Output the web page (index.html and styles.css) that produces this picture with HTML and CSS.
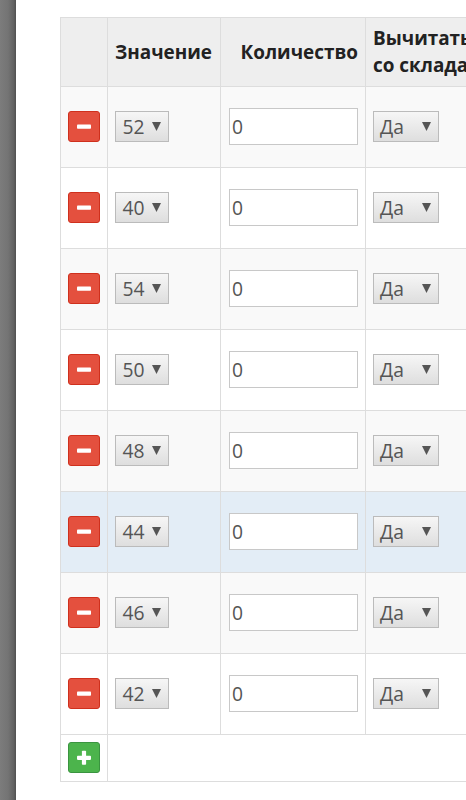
FILE: index.html
```
<!DOCTYPE html>
<html lang="ru">
<head>
<meta charset="utf-8">
<title>Опции</title>
<link rel="stylesheet" href="styles.css">
</head>
<body>
<div class="backdrop"></div>
<main class="panel">
  <div class="table" id="table">
    <div class="row head">
      <div class="cell"></div>
      <div class="cell"><span>Значение</span></div>
      <div class="cell right"><span>Количество</span></div>
      <div class="cell"><span>Вычитать<br>со склада</span></div>
    </div>
  </div>
</main>
<template id="option">
  <div class="row">
    <div class="cell"><button class="btn remove" type="button"><svg viewBox="0 0 32 31"><rect x="9" y="13.500" width="14" height="4.300" rx="0.8"/></svg></button></div>
    <div class="cell"><div class="select"><span class="value"></span><i class="arrow"></i></div></div>
    <div class="cell"><div class="input">0</div></div>
    <div class="cell"><div class="select wide"><span>Да</span><i class="arrow"></i></div></div>
  </div>
</template>
<template id="footer">
  <div class="row foot">
    <div class="cell"><button class="btn add" type="button"><svg viewBox="0 0 32 31"><rect x="9" y="13.700" width="14" height="4.200" rx="0.8"/><rect x="13.900" y="8.800" width="4.200" height="14" rx="0.8"/></svg></button></div>
    <div class="cell"></div>
  </div>
</template>
<script src="script.js"></script>
</body>
</html>
```
FILE: styles.css
```
* { box-sizing: border-box; }
body {
  margin: 0;
  height: 800px;
  overflow: hidden;
  display: flex;
  background: #fff;
  font-family: "Open Sans", "Noto Sans", sans-serif;
  font-size: 20px;
  color: #555;
}
.backdrop {
  flex: 0 0 16px;
  background: linear-gradient(90deg, #7c7c7c 0, #747474 50%, #626262 85%, #505050 100%);
}
.panel {
  flex: 1;
  min-width: 0;
  overflow: hidden;
  padding: 17px 0 0 44px;
}
.table {
  width: 480px;
  border-bottom: 1px solid #ddd;
}
.row {
  display: grid;
  grid-template-columns: 47px 113px 145px 1fr;
  height: 81px;
  background: #fff;
}
.row:nth-child(even) { background: #f9f9f9; }
.row.active { background: #e3edf6; }
.row.head {
  height: 69px;
  background: #eee;
  color: #222;
  font-size: 18.9px;
  font-weight: 700;
  line-height: 27px;
}
.row.foot {
  height: 47px;
  grid-template-columns: 47px 1fr;
  background: #fff;
}
.cell {
  display: flex;
  align-items: center;
  padding: 0 7px 1px;
  border-top: 1px solid #ddd;
  border-left: 1px solid #ddd;
  white-space: nowrap;
}
.head .cell { padding-bottom: 0; }
.right { justify-content: flex-end; }
.btn {
  width: 32px;
  height: 31px;
  flex: none;
  padding: 0;
  border: 1px solid #cf301d;
  border-radius: 3px;
  background: #e4503e;
}
.btn.add {
  border-color: #3a9440;
  background: #4cb44c;
}
.btn svg {
  display: block;
  width: 32px;
  height: 31px;
  margin: -1px;
  fill: #fff;
}
.select {
  display: flex;
  align-items: center;
  justify-content: space-between;
  width: 54px;
  height: 31px;
  padding: 0 7px 0 6.5px;
  border: 1px solid #bbb;
  background: linear-gradient(#f6f6f6, #dedede);
  font-size: 19.3px;
  line-height: 29px;
}
.select.wide {
  width: 66px;
  padding-left: 6px;
}
.arrow {
  width: 9px;
  height: 9px;
  background: #555;
  clip-path: polygon(0 0, 100% 0, 50% 100%);
}
.input {
  width: 129px;
  height: 37px;
  margin-left: 1px;
  padding: 0 2px;
  border: 1px solid #c8c8c8;
  background: #fff;
  font-size: 19.3px;
  line-height: 35px;
}
```
FILE: script.js
```
const table = document.getElementById("table");
const option = document.getElementById("option");
for (const size of [52, 40, 54, 50, 48, 44, 46, 42]) {
  const row = option.content.cloneNode(true);
  row.querySelector(".value").textContent = size;
  if (size === 44) row.querySelector(".row").classList.add("active");
  table.append(row);
}
table.append(document.getElementById("footer").content.cloneNode(true));
```
